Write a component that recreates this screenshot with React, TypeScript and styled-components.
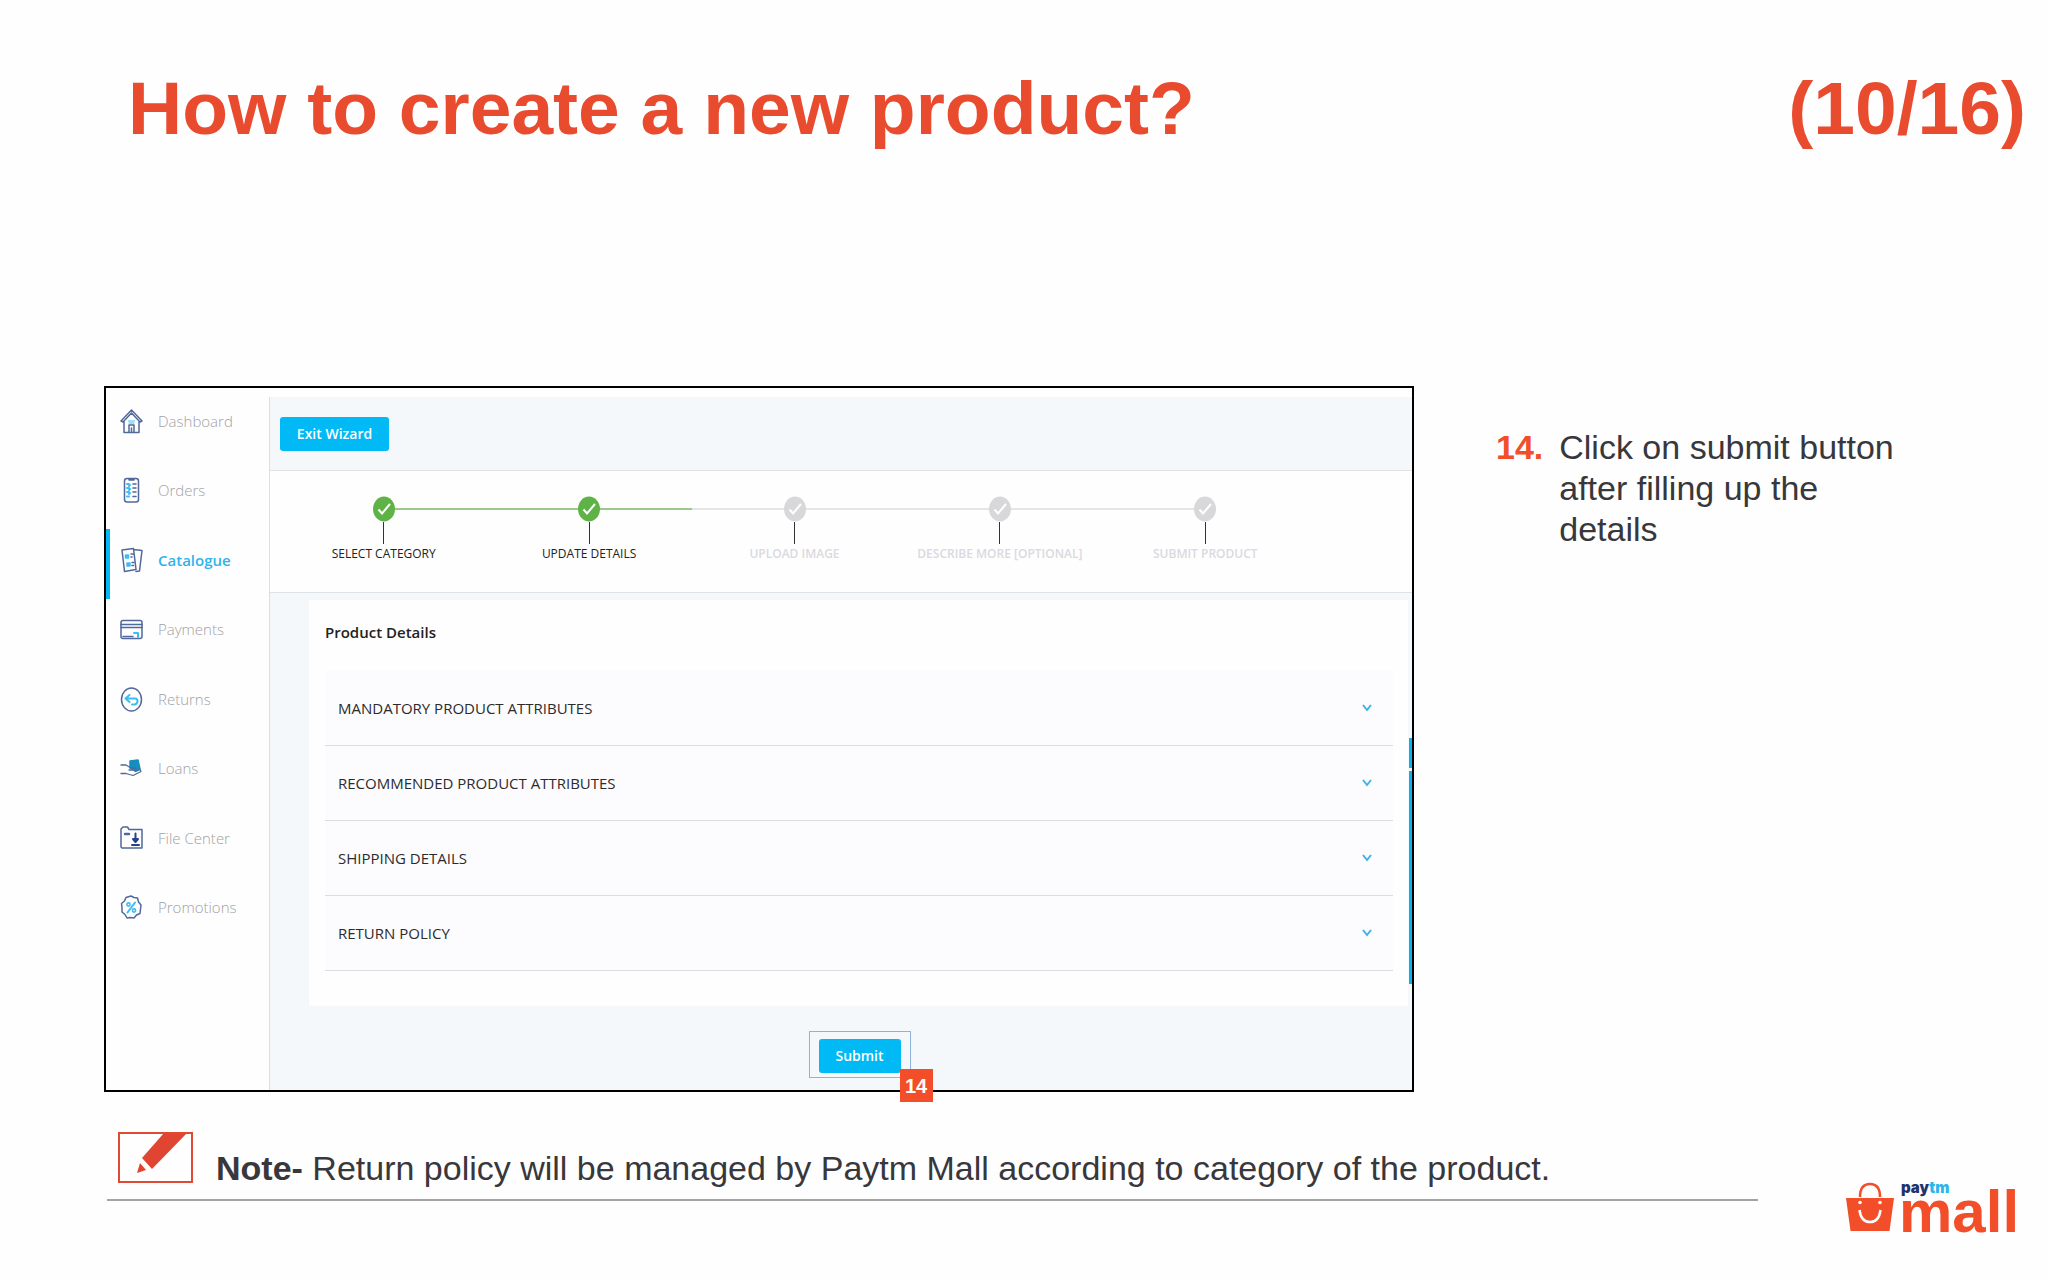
import React from "react";
import styled, { createGlobalStyle } from "styled-components";

const ORANGE = "#e94b2f";
const BLUE = "#00b9f5";
const NAVY = "#52689b";
const SKY = "#3fbdf3";
const SANS = `"Liberation Sans", Arial, sans-serif`;
const UI = `"Open Sans", "Noto Sans", sans-serif`;

const GlobalStyle = createGlobalStyle`
  *, *::before, *::after { box-sizing: border-box; }
  body { margin: 0; background: #fefefe; color: #38373c; font-family: ${SANS}; }
  h1, h2, p, ul, ol { margin: 0; padding: 0; }
  ul, ol { list-style: none; }
  button { font: inherit; border: 0; cursor: pointer; }
  svg { display: block; flex: none; }
`;

const Slide = styled.div`
  min-height: 100vh;
`;

const SlideHeader = styled.header`
  display: flex;
  justify-content: space-between;
  padding: 64px 22px 0 128px;
  color: ${ORANGE};
  font-size: 75px;
  font-weight: 700;
  line-height: 88px;
`;

const Title = styled.h1`
  font-size: inherit;
`;

const Main = styled.main`
  display: grid;
  grid-template-columns: minmax(0, 1310fr) minmax(0, 420fr);
  column-gap: 82px;
  padding: 234px 132px 0 104px;
`;

const Frame = styled.section`
  display: flex;
  border: 2px solid #000;
  background: #fefefe;
  font-family: ${UI};
`;

const Sidebar = styled.nav`
  width: 163px;
  flex: none;
  padding-top: 2px;
`;

const NavList = styled.ul`
  display: grid;
  grid-template-rows: repeat(8, 1fr);
  height: 556px;
`;

const NavLink = styled.a<{ $active?: boolean }>`
  display: flex;
  align-items: center;
  gap: 15px;
  height: 100%;
  padding: 0 0 8px 10px;
  border-left: 4px solid ${(p) => (p.$active ? BLUE : "transparent")};
  color: ${(p) => (p.$active ? "#2fb3ec" : "#a3a1a6")};
  font-size: 15px;
  font-weight: ${(p) => (p.$active ? 600 : 300)};
  text-decoration: none;
  white-space: nowrap;
`;

const Content = styled.div`
  flex: 1;
  min-width: 0;
  margin-top: 9px;
  border-left: 1px solid #dcdee1;
  background: #f5f8fa;
`;

const Toolbar = styled.div`
  padding: 20px 10px 19px;
  border-bottom: 1px solid #e0e2e5;
`;

const ActionButton = styled.button<{ $width: number }>`
  display: block;
  width: ${(p) => p.$width}px;
  height: 34px;
  padding: 0;
  border-radius: 3px;
  background: ${BLUE};
  color: #fff;
  font-size: 14px;
  font-weight: 600;
  line-height: 20px;
`;

const Stepper = styled.ol`
  display: grid;
  grid-template-columns: repeat(5, 1fr);
  padding: 25px 104px 28px 11px;
  border-bottom: 1px solid #dfe2e4;
  background: #fefefe;
`;

const Step = styled.li<{ $done: boolean }>`
  display: flex;
  flex-direction: column;
  align-items: center;
  color: ${(p) => (p.$done ? "#222" : "#dad9de")};
  font-size: 12px;
  font-weight: ${(p) => (p.$done ? 400 : 600)};
  line-height: 20px;
  white-space: nowrap;
`;

const StepTrack = styled.div`
  display: flex;
  align-items: center;
  align-self: stretch;
`;

const Connector = styled.span<{ $tone: "done" | "todo" | "none" }>`
  flex: 1;
  height: 2px;
  background: ${(p) => ({ done: "#9cc88c", todo: "#e5e5e7", none: "transparent" })[p.$tone]};
`;

const Stem = styled.span`
  width: 1px;
  height: 22px;
  background: #333;
`;

const Body = styled.div`
  display: grid;
  grid-template-columns: minmax(0, 1fr) 3px;
  column-gap: 1px;
  padding: 7px 0 0 39px;
`;

const Card = styled.section`
  padding: 20px 15px 35px 16px;
  background: #fefefe;
`;

const CardTitle = styled.h2`
  color: #222;
  font-size: 15px;
  font-weight: 600;
  line-height: 24px;
`;

const Accordion = styled.ul`
  margin-top: 27px;
`;

const AccordionButton = styled.button`
  display: flex;
  align-items: center;
  justify-content: space-between;
  width: 100%;
  height: 75px;
  padding: 0 21px 0 13px;
  border-bottom: 1px solid #dddde0;
  background: #fcfbfd;
  color: #2b2b2e;
  font-size: 15px;
  text-align: left;
`;

const Rail = styled.div`
  display: flex;
  flex-direction: column;
  gap: 3px;
  padding-top: 138px;
`;

const Thumb = styled.span<{ $length: number }>`
  height: ${(p) => p.$length}px;
  background: #0bb0ec;
`;

const Actions = styled.div`
  display: flex;
  justify-content: center;
  padding: 25px 0 12px 37px;
`;

const Callout = styled.div`
  position: relative;
  padding: 7px 9px 4px;
  border: 1px solid #8db3dc;
`;

const CalloutBadge = styled.span`
  position: absolute;
  left: 90px;
  top: 37px;
  width: 33px;
  height: 33px;
  background: #f24e29;
  color: #fff;
  font: 700 20px/35px ${SANS};
  text-align: center;
`;

const Instructions = styled.ol`
  padding-top: 41px;
`;

const Instruction = styled.li`
  display: flex;
  gap: 16px;
  font-size: 34px;
  line-height: 41px;
`;

const Marker = styled.b`
  color: #f24e29;
`;

const Footer = styled.footer`
  display: flex;
  align-items: flex-start;
  gap: 88px;
  padding: 40px 33px 0 107px;
`;

const Note = styled.div`
  display: flex;
  flex: 1;
  gap: 23px;
  padding-left: 11px;
  height: 69px;
  border-bottom: 2px solid #a4a4a6;
  font-size: 34px;
  line-height: 40px;
`;

const NoteText = styled.p`
  padding-top: 16px;
  white-space: nowrap;
`;

const Logo = styled.div`
  display: flex;
  gap: 5px;
  width: 169px;
  padding-top: 50px;
`;

const LogoWords = styled.div`
  display: flex;
  flex-direction: column;
  font-weight: 700;
`;

const LogoTop = styled.span`
  padding-left: 2px;
  color: #20336b;
  font: 900 15px/12px Inter, ${SANS};
`;

const LogoTm = styled.span`
  color: #2cb6ea;
`;

const LogoMain = styled.span`
  color: #f24e29;
  font-size: 60px;
  line-height: 36px;
`;

const Glyph = ({ children }: { children: React.ReactNode }) => (
  <svg width="23" height="26" viewBox="0 0 23 26" fill="none" stroke={NAVY} strokeWidth="1.5" strokeLinejoin="round" strokeLinecap="round" aria-hidden="true">
    {children}
  </svg>
);

const HomeGlyph = () => (
  <Glyph>
    <path d="M1 13 11.500 2 22 13 20 14 11.500 5 3 14ZM4 13.500V24.500H19V13.500M9 24V17H14V24M11.500 20v4" />
    <path d="M8.500 13h6M9 15h5" stroke={SKY} strokeWidth="1" />
  </Glyph>
);

const OrdersGlyph = () => (
  <Glyph>
    <rect x="4.500" y="1.500" width="14" height="23.500" rx="2.500" />
    <path d="M9 2h5v1H9z" fill={NAVY} />
    <path d="M7 7h2M7 11h2M7 15h2M7 19.500h2M9 9l1-1M9 13l1-1M9 17l1-1" stroke={SKY} strokeWidth="2" />
    <path d="M13 7h3M13 11h3M13 15h3M13 19.500h3" strokeWidth="1.600" />
  </Glyph>
);

const CatalogueGlyph = () => (
  <Glyph>
    <path d="M14 2.500 22 3.500 19.500 24 16 24.500M2 3 13.500 1.500 16 22.500 4.500 24.500Z" />
    <path d="M5.500 8h3v3h-3zM7 16h3v3H7z" fill={SKY} stroke={SKY} />
    <path d="M11 7h2.500M11 10h1M12 15.500h2M12 18.500h1.500" />
  </Glyph>
);

const PaymentsGlyph = () => (
  <Glyph>
    <rect x="1" y="4.500" width="21" height="18" rx="2" />
    <path d="M1 8.500h21M1 11.500h21M3 20.500h10" />
    <path d="M14 17h4v3M18 17v4" stroke={SKY} strokeWidth="2" />
  </Glyph>
);

const ReturnsGlyph = () => (
  <Glyph>
    <ellipse cx="11.500" cy="13.500" rx="10" ry="11.500" />
    <path d="M9.500 9 5.500 12.500 9.500 16M6 12.500H15Q17.500 12.500 17.500 15T15 18.500H12" stroke={SKY} strokeWidth="2" />
  </Glyph>
);

const LoansGlyph = () => (
  <Glyph>
    <path d="M10 6 18 5 20 14 16 16 10 13Z" fill="#168dbe" stroke="#168dbe" />
    <path d="M1 10h5l5 3h4q1 2-2 2H9M1 18.500h5l7 2 8-4-1-2-5 2" strokeWidth="1.300" />
  </Glyph>
);

const FileGlyph = () => (
  <Glyph>
    <path d="M1 22V4L3 2H7.500L9 4.500H22V23H2Z" />
    <path d="M5 9h4" strokeWidth="2.500" />
    <path d="M15.500 8.500v7M13 14l2.500 3L18 14ZM12 20h7" stroke="#26428a" strokeWidth="2" />
  </Glyph>
);

const PromoGlyph = () => (
  <Glyph>
    <path d="M11 2 14 3.500 17.500 4 18.500 8 21 11 20.500 15 20 19.500 16.500 21 14 24 10.500 23.500 7 24 5 20.500 2 18 2 13.500 1.500 9.500 4.500 7 6 3.500Z" />
    <path d="M15 8.500 7.500 18.500" stroke={SKY} strokeWidth="2" />
    <circle cx="8.500" cy="10.500" r="1.600" stroke={SKY} strokeWidth="1.600" />
    <circle cx="14" cy="16.500" r="1.600" stroke={SKY} strokeWidth="1.600" />
  </Glyph>
);

const StepMark = ({ done }: { done: boolean }) => (
  <svg width="22" height="26" viewBox="0 0 22 26" aria-hidden="true">
    <ellipse cx="11" cy="13" rx="11" ry="12.500" fill={done ? "#5fb346" : "#d8d8da"} />
    <path d="M5.500 13.500 9 17.500 17 8" fill="none" stroke="#fff" strokeWidth="2" />
  </svg>
);

const Chevron = () => (
  <svg width="10" height="8" viewBox="0 0 10 8" aria-hidden="true">
    <path d="M1 1 5 6 9 1" fill="none" stroke="#3fb2e6" strokeWidth="2" />
  </svg>
);

const PencilBox = () => (
  <svg width="75" height="51" viewBox="0 0 75 51" aria-hidden="true">
    <rect x="1" y="1" width="73" height="49" fill="none" stroke="#df4a35" strokeWidth="2" />
    <path d="M46 1H69L34 37 24 26ZM22 31 28 38 19 41Z" fill="#df4530" />
  </svg>
);

const BagMark = () => (
  <svg width="48" height="50" viewBox="0 0 48 50" aria-hidden="true">
    <path d="M0 16H48L43.500 49H4.500Z" fill="#f24e29" />
    <path d="M14 15Q14 2 24 2T34 15" fill="none" stroke="#f24e29" strokeWidth="2.500" />
    <path d="M13.500 28Q15 40 24 40T34.500 28" fill="none" stroke="#fff" strokeWidth="2.500" />
    <circle cx="14" cy="20.500" r="1.800" fill="#fff" />
    <circle cx="34" cy="20.500" r="1.800" fill="#fff" />
  </svg>
);

const navItems = [
  { label: "Dashboard", Icon: HomeGlyph },
  { label: "Orders", Icon: OrdersGlyph },
  { label: "Catalogue", Icon: CatalogueGlyph, active: true },
  { label: "Payments", Icon: PaymentsGlyph },
  { label: "Returns", Icon: ReturnsGlyph },
  { label: "Loans", Icon: LoansGlyph },
  { label: "File Center", Icon: FileGlyph },
  { label: "Promotions", Icon: PromoGlyph },
];

const steps = [
  { label: "SELECT CATEGORY", done: true },
  { label: "UPDATE DETAILS", done: true },
  { label: "UPLOAD IMAGE", done: false },
  { label: "DESCRIBE MORE [OPTIONAL]", done: false },
  { label: "SUBMIT PRODUCT", done: false },
];

const sections = [
  "MANDATORY PRODUCT ATTRIBUTES",
  "RECOMMENDED PRODUCT ATTRIBUTES",
  "SHIPPING DETAILS",
  "RETURN POLICY",
];

export default function App() {
  return (
    <Slide>
      <GlobalStyle />
      <SlideHeader>
        <Title>How to create a new product?</Title>
        <span>(10/16)</span>
      </SlideHeader>
      <Main>
        <Frame>
          <Sidebar>
            <NavList>
              {navItems.map(({ label, Icon, active }) => (
                <li key={label}>
                  <NavLink href="#" $active={active} aria-current={active ? "page" : undefined}>
                    <Icon />
                    {label}
                  </NavLink>
                </li>
              ))}
            </NavList>
          </Sidebar>
          <Content>
            <Toolbar>
              <ActionButton type="button" $width={109}>Exit Wizard</ActionButton>
            </Toolbar>
            <Stepper>
              {steps.map(({ label, done }, i) => {
                const tone = done ? "done" : "todo";
                return (
                  <Step key={label} $done={done}>
                    <StepTrack>
                      <Connector $tone={i === 0 ? "none" : tone} />
                      <StepMark done={done} />
                      <Connector $tone={i === steps.length - 1 ? "none" : tone} />
                    </StepTrack>
                    <Stem />
                    {label}
                  </Step>
                );
              })}
            </Stepper>
            <Body>
              <Card>
                <CardTitle>Product Details</CardTitle>
                <Accordion>
                  {sections.map((name) => (
                    <li key={name}>
                      <AccordionButton type="button" aria-expanded={false}>
                        {name}
                        <Chevron />
                      </AccordionButton>
                    </li>
                  ))}
                </Accordion>
              </Card>
              <Rail>
                <Thumb $length={30} />
                <Thumb $length={213} />
              </Rail>
            </Body>
            <Actions>
              <Callout>
                <ActionButton type="submit" $width={82}>Submit</ActionButton>
                <CalloutBadge>14</CalloutBadge>
              </Callout>
            </Actions>
          </Content>
        </Frame>
        <Instructions start={14}>
          <Instruction>
            <Marker>14.</Marker>
            <p>Click on submit button after filling up the details</p>
          </Instruction>
        </Instructions>
      </Main>
      <Footer>
        <Note>
          <PencilBox />
          <NoteText>
            <b>Note-</b> Return policy will be managed by Paytm Mall according to category of the product.
          </NoteText>
        </Note>
        <Logo>
          <BagMark />
          <LogoWords>
            <LogoTop>pay<LogoTm>tm</LogoTm></LogoTop>
            <LogoMain>mall</LogoMain>
          </LogoWords>
        </Logo>
      </Footer>
    </Slide>
  );
}
